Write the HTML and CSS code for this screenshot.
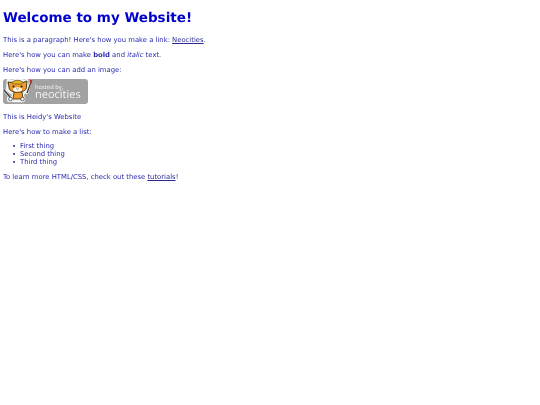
FILE: index.html
```html
<!DOCTYPE html>
<html lang="en">
<head>
<meta charset="utf-8">
<title>Welcome to my Website!</title>
<link rel="stylesheet" href="styles.css">
</head>
<body>
<h1>Welcome to my Website!</h1>
<p>This is a paragraph! Here's how you make a link: <a href="#">Neocities</a>.</p>
<p>Here's how you can make <strong>bold</strong> and <em>italic</em> text.</p>
<p class="lead">Here's how you can add an image:</p>
<div class="badge">
<svg class="cat" viewBox="0 0 32 25" width="32" height="25" aria-hidden="true">
<g fill="#f2f2f2" stroke="#f2f2f2" stroke-width="2.500" stroke-linejoin="round" stroke-linecap="round">
<path d="M5 1l5 1c3-2 8-2 11 0l3-1v11l-4 3v7H10v-7l-6-4z"/>
<path d="M28 1l-4 13M1 11l6 7"/>
<circle cx="7" cy="20" r="2"/>
<circle cx="19" cy="20" r="2"/>
</g>
<path d="M1 11l6 7" stroke="#444" stroke-width="1.500" stroke-linecap="round"/>
<path d="M28 3l-4 11" stroke="#4a3018" stroke-width="1.200"/>
<path d="M27 0l2.500 1-1 3.500-2-.7z" fill="#b5342a"/>
<path d="M11 13h8l1 7H10z" fill="#ee9c2c" stroke="#3a2a10" stroke-width=".8"/>
<path d="M5 3l4 .5c3-2 8-2 11 0L24 2l-.5 5c.5 4-3 6-9 6S6 11 6 8z" fill="#ee9c2c" stroke="#3a2a10" stroke-width=".9"/>
<path d="M9 3.500c3-3 8-3 11 0l-1.500 1.500h-8z" fill="#e3b81e" stroke="#3a2a10" stroke-width=".5"/>
<ellipse cx="14.500" cy="10.500" rx="4.500" ry="2.300" fill="#fff6e4"/>
<circle cx="10.500" cy="7.500" r="1.100" fill="#222"/>
<circle cx="18.500" cy="7.500" r="1.100" fill="#222"/>
<path d="M13.500 9.500l1 .8 1-.8" stroke="#222" stroke-width=".6" fill="none"/>
<circle cx="7.500" cy="20" r="1.800" fill="#fff" stroke="#333" stroke-width=".7"/>
<circle cx="19.500" cy="20" r="1.800" fill="#fff" stroke="#333" stroke-width=".7"/>
</svg>
<div class="badge-text">
<span class="hosted">hosted by,</span>
<span class="neo">neocities</span>
</div>
</div>
<p>This is Heidy's Website</p>
<p>Here's how to make a list:</p>
<ul>
<li>First thing</li>
<li>Second thing</li>
<li>Third thing</li>
</ul>
<p>To learn more HTML/CSS, check out these <a href="#">tutorials</a>!</p>
</body>
</html>
```
FILE: styles.css
```css
html, body {
  background: #fff;
}
body {
  margin: 3px;
  padding-top: 8px;
  font-family: "DejaVu Sans", Verdana, sans-serif;
  font-size: 6.840px;
  line-height: 8px;
  color: #2a2ab0;
  text-rendering: geometricPrecision;
  filter: blur(0.25px);
}
h1 {
  margin: 0 0 9.500px;
  font-size: 13.500px;
  line-height: 15px;
  color: #0000cd;
}
p {
  margin: 0 0 7px;
}
.lead {
  margin-bottom: 5.500px;
}
a {
  color: #2a2a90;
}
ul {
  margin: 0 0 7px;
  padding: 0 0 0 10px;
  list-style: none;
}
li {
  display: flex;
  align-items: center;
  gap: 5px;
  height: 7.700px;
}
li::before {
  content: "";
  width: 2px;
  height: 2px;
  border-radius: 50%;
  background: #2a2ab0;
}
.badge {
  display: flex;
  align-items: center;
  width: 85px;
  height: 25px;
  margin-bottom: 8.500px;
  border-radius: 3px;
  background: #a2a2a2;
  overflow: hidden;
}
.cat {
  flex: none;
}
.badge-text {
  display: flex;
  flex-direction: column;
  color: #f4f4f4;
  font-family: "Open Sans", sans-serif;
}
.hosted {
  font-size: 5.800px;
  line-height: 6px;
}
.neo {
  font-size: 11px;
  line-height: 10px;
}
```
